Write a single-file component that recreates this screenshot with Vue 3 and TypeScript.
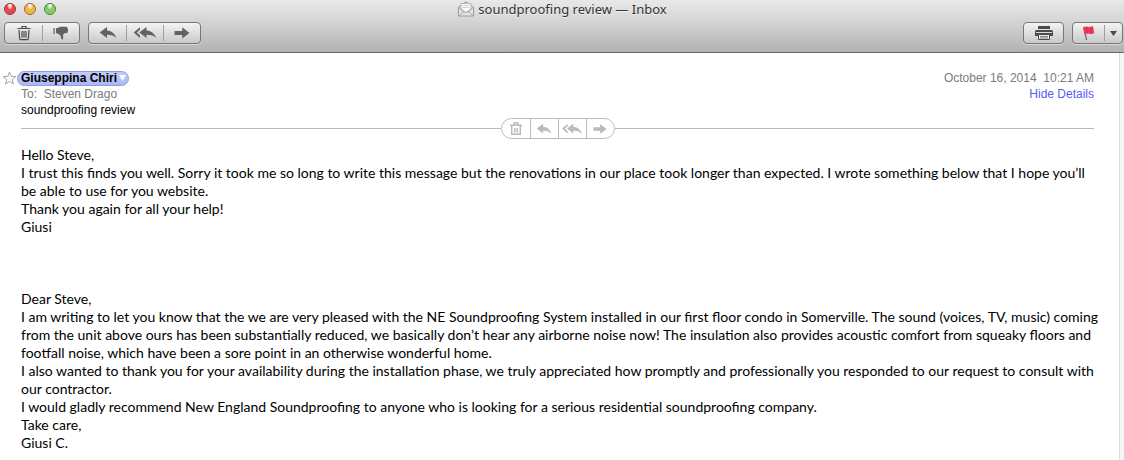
<script setup lang="ts">
interface Action {
  id: string
  label: string
}

const manage: Action[] = [
  { id: 'trash', label: 'Delete' },
  { id: 'junk', label: 'Junk' },
]
const respond: Action[] = [
  { id: 'reply', label: 'Reply' },
  { id: 'reply-all', label: 'Reply all' },
  { id: 'forward', label: 'Forward' },
]
const inline: Action[] = [
  { id: 'trash-small', label: 'Delete message' },
  { id: 'reply', label: 'Reply to message' },
  { id: 'reply-all', label: 'Reply to everyone' },
  { id: 'forward', label: 'Forward message' },
]

const note: string[] = [
  'Hello Steve,',
  'I trust this finds you well. Sorry it took me so long to write this message but the renovations in our place took longer than expected. I wrote something below that I hope you’ll\nbe able to use for you website.',
  'Thank you again for all your help!',
  'Giusi',
]
const review: string[] = [
  'Dear Steve,',
  'I am writing to let you know that the we are very pleased with the NE Soundproofing System installed in our first floor condo in Somerville. The sound (voices, TV, music) coming\nfrom the unit above ours has been substantially reduced, we basically don’t hear any airborne noise now! The insulation also provides acoustic comfort from squeaky floors and\nfootfall noise, which have been a sore point in an otherwise wonderful home.',
  'I also wanted to thank you for your availability during the installation phase, we truly appreciated how promptly and professionally you responded to our request to consult with\nour contractor.',
  'I would gladly recommend New England Soundproofing to anyone who is looking for a serious residential soundproofing company.',
  'Take care,',
  'Giusi C.',
]
</script>

<template>
  <div class="window">
    <svg class="defs" width="0" height="0" aria-hidden="true">
      <symbol id="trash" viewBox="0 0 18 16">
        <path d="M7 3V1.500h4V3M2.500 3.500h13M4 5l.7 8.800q.1.900 1 .9h6.600q.9 0 1-.9L14 5M7 6v6.500M9 6v6.500M11 6v6.500" fill="none" stroke="currentColor" stroke-width="1.200" />
      </symbol>
      <symbol id="trash-small" viewBox="0 0 16 14">
        <path d="M6 2.500V1h4v1.500M2 3.200h12M3.700 4v8.300h8.600V4" fill="none" stroke="currentColor" stroke-width="1.500" />
        <path d="M6.500 6v4.500M8 6v4.500M9.500 6v4.500" stroke="currentColor" />
      </symbol>
      <symbol id="junk" viewBox="0 0 18 16">
        <path d="M1.500 3h1.200v6H1.500zM4 3.300l2-.3 2-1.200h6.500q1 .2.800 1.200 1 .6.500 1.500.7.900 0 1.700.2 1.200-.8 1.800l-3.200.6-.8 2.200.2 3q-1.200 1.200-1.800.2L8.500 10.500 6 8.700 4 8z" fill="currentColor" />
      </symbol>
      <symbol id="reply" viewBox="0 0 18 16">
        <path d="M.7 7.500L8 2v3.500q6.500.2 9.300 7.500Q13.500 9.700 8 9.800V13z" fill="currentColor" />
      </symbol>
      <symbol id="reply-all" viewBox="0 0 24 16">
        <path d="M.7 7.500L7 2.200v2.600L3.800 7.500 7 10.300V13z" fill="currentColor" />
        <path d="M6.300 7.500L13.500 2v3.500q6.700.2 9.800 7.500-4-3.300-9.800-3.200V13z" fill="currentColor" />
      </symbol>
      <symbol id="forward" viewBox="0 0 18 16">
        <path d="M1.500 6h7.700V2.200L16.500 8l-7.300 5.500V10H1.500z" fill="currentColor" />
      </symbol>
    </svg>

    <header class="chrome">
      <div class="titlebar">
        <div class="lights">
          <button class="light red" type="button" aria-label="Close"></button>
          <button class="light amber" type="button" aria-label="Minimize"></button>
          <button class="light green" type="button" aria-label="Zoom"></button>
        </div>
        <h1 class="title">
          <svg width="18" height="16" viewBox="0 0 18 16" aria-hidden="true">
            <path d="M1.500 6L9 .8 16.500 6v9h-15z" fill="#e6e6e6" stroke="#999" />
            <path d="M4 2.500h10v7l-5 2.300-5-2.300z" fill="#fafafa" stroke="#aaa" stroke-width=".8" />
            <path d="M5.500 4.500h7M5.500 6.500h7" stroke="#d4d4d4" />
            <path d="M2 6.500l7 5 7-5M2 14.500l5-4M16 14.500l-5-4" fill="none" stroke="#aaa" />
          </svg>
          <span>soundproofing review — Inbox</span>
        </h1>
      </div>
      <div class="toolbar">
        <div class="group">
          <button v-for="a in manage" :key="a.id" type="button" :class="['tool', a.id]" :aria-label="a.label">
            <svg width="18" height="16"><use :href="'#' + a.id" /></svg>
          </button>
        </div>
        <div class="group">
          <button v-for="a in respond" :key="a.id" type="button" class="tool mid" :aria-label="a.label">
            <svg :width="a.id === 'reply-all' ? 24 : 18" height="16"><use :href="'#' + a.id" /></svg>
          </button>
        </div>
        <div class="spacer"></div>
        <div class="group">
          <button type="button" class="tool print" aria-label="Print">
            <svg width="20" height="16" viewBox="0 0 20 16">
              <path d="M4 1h12v3H4zM2.500 5h15q1.500 0 1.500 1.500V11h-3V9H4v2H1V6.500Q1 5 2.500 5z" fill="#4a4a4a" />
              <path d="M2 7.500h16" stroke="#ddd" />
              <path d="M4.500 9.500h11v5h-11z" fill="#ececec" stroke="#4a4a4a" />
              <path d="M6 11.500h8M6 13h8" stroke="#666" stroke-width=".8" />
            </svg>
          </button>
        </div>
        <div class="group">
          <button type="button" class="tool flag" aria-label="Flag">
            <svg width="16" height="16" viewBox="0 0 16 16">
              <path d="M3 2.500l2.500 12.500" stroke="#777" stroke-width="1.400" />
              <path d="M2 2.500q2.500-1.500 4.800-.8t5.200-.7l1.300 7q-2.500 1.500-4.800.7T3.500 9.500z" fill="#ee3a58" />
              <path d="M5.500 2l1.200 6.500M9.300 2l1.200 6.500" stroke="#c4304c" stroke-width=".8" />
            </svg>
          </button>
          <button type="button" class="tool arrow" aria-label="Flag colors">
            <svg width="7" height="5" viewBox="0 0 7 5"><path d="M0 0h7L3.500 5z" fill="#4a4a4a" /></svg>
          </button>
        </div>
      </div>
    </header>

    <main class="pane">
      <article class="message">
        <div class="meta">
          <div class="from">
            <button class="star" type="button" aria-label="Flag sender">
              <svg width="15" height="14" viewBox="0 0 15 14">
                <path d="M7.500.9l1.700 4.400 4.700.2-3.700 2.900 1.300 4.600-4-2.700-4 2.700 1.300-4.600L1.100 5.500l4.700-.2z" fill="#fff" stroke="#a2a5ad" />
              </svg>
            </button>
            <button class="sender" type="button">
              <span>Giuseppina Chiri</span>
              <svg width="7" height="6" viewBox="0 0 7 6" aria-hidden="true"><path d="M0 0h7L3.500 6z" fill="#fff" /></svg>
            </button>
          </div>
          <time class="date" datetime="2014-10-16T10:21">October 16, 2014&nbsp; 10:21 AM</time>
          <p class="to">To:&nbsp; Steven Drago</p>
          <a class="details" href="#">Hide Details</a>
          <p class="subject">soundproofing review</p>
        </div>

        <div class="divider">
          <div class="capsule">
            <button v-for="a in inline" :key="a.id" type="button" :aria-label="a.label">
              <svg :width="a.id === 'reply-all' ? 22 : 16" height="14"><use :href="'#' + a.id" /></svg>
            </button>
          </div>
        </div>

        <div class="body">
          <section>
            <p v-for="line in note" :key="line">{{ line }}</p>
          </section>
          <section>
            <p v-for="line in review" :key="line">{{ line }}</p>
          </section>
        </div>
      </article>
      <div class="gutter"></div>
    </main>
  </div>
</template>

<style>
body {
  margin: 0;
  background: #fff;
}
</style>

<style scoped>
.window {
  display: flex;
  flex-direction: column;
  min-height: 100vh;
  font: 12px/16px "Liberation Sans", sans-serif;
  color: #000;
}
.defs {
  position: absolute;
}
button {
  display: flex;
  align-items: center;
  justify-content: center;
  margin: 0;
  padding: 0;
  border: 0;
  background: none;
  color: inherit;
  font: inherit;
}
p,
h1 {
  margin: 0;
}
.chrome {
  box-sizing: border-box;
  height: 53px;
  border-bottom: 1px solid #686868;
  background: linear-gradient(#e9e9e9, #d2d2d2 45%, #b2b2b2);
}
.titlebar {
  display: grid;
  grid-template-columns: 1fr auto 1fr;
  align-items: center;
  height: 18px;
  margin-bottom: 4px;
}
.lights {
  display: flex;
  gap: 8px;
  padding-left: 4px;
}
.light {
  box-sizing: border-box;
  width: 12px;
  height: 12px;
  border: 1px solid #555;
  border-radius: 50%;
}
.red {
  border-color: #8d3238;
  background: radial-gradient(ellipse at 50% 10%, #fff 10%, #ee4852 40%, #e8404c 65%, #ff9c9c);
}
.amber {
  border-color: #96662a;
  background: radial-gradient(ellipse at 50% 10%, #fff 10%, #eeb23e 40%, #f1b541 65%, #fff08a);
}
.green {
  border-color: #4a7c3c;
  background: radial-gradient(ellipse at 50% 10%, #fff 10%, #7ccb60 40%, #80cf60 65%, #ccff9c);
}
.title {
  display: flex;
  align-items: center;
  gap: 3px;
  font: 13px/18px "Noto Sans", sans-serif;
  color: #333;
  text-shadow: 0 1px 0 #f2f2f2;
}
.toolbar {
  display: flex;
  gap: 8px;
  padding: 0 1px 0 4px;
}
.spacer {
  flex: 1;
}
.group {
  box-sizing: border-box;
  display: flex;
  align-items: center;
  height: 22px;
  border: 1px solid #777;
  border-radius: 4px;
  background: linear-gradient(#f4f4f4, #c9c9c9);
  box-shadow: 0 1px 0 #d8d8d8;
}
.tool {
  box-sizing: border-box;
  width: 38px;
  height: 16px;
  color: #4c4c4c;
}
.tool + .tool {
  border-left: 1px solid #a0a0a0;
}
.tool.junk {
  color: #626262;
}
.tool.mid {
  width: 37px;
  color: #626262;
}
.tool.print {
  width: 39px;
}
.tool.flag {
  width: 31px;
}
.tool.arrow {
  width: 18px;
}
.tool.trash,
.tool.junk {
  width: 37px;
}
.pane {
  display: flex;
  flex: 1;
}
.message {
  flex: 1;
  min-width: 0;
  padding: 17px 25px 8px 21px;
}
.gutter {
  box-sizing: border-box;
  width: 5px;
  border-left: 1px solid #dedede;
  background: #f6f6f6;
}
.meta {
  display: grid;
  grid-template-columns: 1fr auto;
}
.from {
  display: flex;
  align-items: center;
  margin-left: -19px;
}
.sender {
  gap: 2px;
  height: 15px;
  padding: 0 2px 0 3px;
  border: 1px solid #8c9aea;
  border-radius: 8px;
  box-sizing: border-box;
  background: linear-gradient(#c4ccf8, #aab8f2);
  font-weight: bold;
}
.date,
.to {
  color: #7b7b7b;
}
.date,
.details {
  text-align: right;
}
.details {
  color: #5560f5;
  text-decoration: none;
}
.divider {
  display: flex;
  align-items: center;
  height: 21px;
}
.divider::before,
.divider::after {
  content: "";
  flex: 1;
  height: 1px;
  background: #b9b9b9;
}
.capsule {
  box-sizing: border-box;
  display: flex;
  height: 21px;
  border: 1px solid #bcbcbc;
  border-radius: 11px;
}
.capsule button {
  box-sizing: border-box;
  width: 28px;
  color: #bababa;
}
.capsule button + button {
  border-left: 1px solid #bcbcbc;
}
.body {
  display: grid;
  gap: 54px;
  margin-top: 7px;
  font: 14px/18px Lato, sans-serif;
  white-space: pre;
}
</style>
